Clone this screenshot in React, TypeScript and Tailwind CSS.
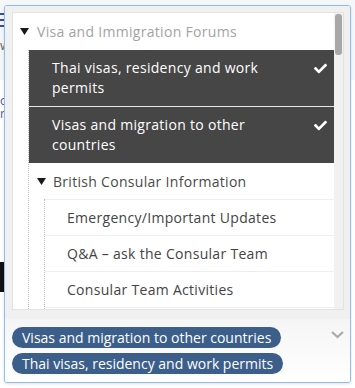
import React from "react";
import { FaCheck } from "react-icons/fa";

const font = { fontFamily: '"Open Sans", "Liberation Sans", sans-serif' };

function Tri() {
  return (
    <svg width="9" height="7" viewBox="0 0 9 7" className="shrink-0">
      <polygon points="0,0 9,0 4.5,7" fill="#1a1a1a" />
    </svg>
  );
}

function DarkRow({ lines }: { lines: string[] }) {
  return (
    <div className="flex items-start justify-between bg-[#464646] pl-[23px] pr-[7px] py-2 text-white text-[14px] leading-[20px] tracking-[0.3px]">
      <div>
        {lines.map((l) => (
          <div key={l}>{l}</div>
        ))}
      </div>
      <FaCheck className="mt-[4px] text-[13px]" />
    </div>
  );
}

function ChildRow({ text }: { text: string }) {
  return (
    <div className="h-[36px] flex items-center pl-[22px] text-[14px] tracking-[0.3px] text-[#444] border-t border-[#eeeeee]">
      {text}
    </div>
  );
}

export default function App() {
  return (
    <div className="relative w-[355px] h-[388px] overflow-hidden bg-white" style={font}>
      {/* background page */}
      <div className="h-[80px] bg-[#f5f6f8] pt-[13px] flex flex-col items-start">
        <div className="flex flex-col gap-[4px] w-[14px]">
          <div className="h-[2px] bg-[#3a4aa8]" />
          <div className="h-[2px] bg-[#3a4aa8]" />
          <div className="h-[2px] bg-[#3a4aa8]" />
        </div>
        <span className="mt-[12px] text-[13px] text-[#666] leading-none">w</span>
      </div>
      <div className="pt-[14px] flex flex-col items-start">
        <span className="text-[12px] leading-[13px] whitespace-pre-line text-[#4a4f9a]">{"o\nr"}</span>
      </div>
      <div className="mt-[142px] h-[30px] w-[20px] bg-[#111]" />

      {/* popup */}
      <div className="absolute left-[4px] top-[5px] w-[347px] h-[378px] border border-[#8fbdec] rounded-[3px] bg-white shadow-[0_1px_3px_rgba(0,0,0,0.12)] flex flex-col overflow-hidden">
        <div className="bg-[#f0f0f0] pt-[6px] pl-[7px] pr-[6px] pb-[9px]">
          <div className="h-[298px] bg-white border border-[#e2e2e2] flex overflow-hidden">
            <div className="flex-1 overflow-hidden">
              <div className="h-[37px] flex items-center pl-[7px] gap-[8px] text-[14px] tracking-[0.3px] text-[#a3a3a3]">
                <Tri />
                <span>Visa and Immigration Forums</span>
              </div>
              <div className="ml-[15px] border-l border-dotted border-[#bbbbbb]">
                <DarkRow lines={["Thai visas, residency and work", "permits"]} />
                <div className="h-px bg-[#e6e6e6]" />
                <DarkRow lines={["Visas and migration to other", "countries"]} />
                <div className="h-[36px] flex items-center pl-[8px] gap-[7px] text-[14px] tracking-[0.3px] text-[#4a4a4a]">
                  <Tri />
                  <span>British Consular Information</span>
                </div>
                <div className="ml-[15px] border-l border-dotted border-[#bbbbbb]">
                  <ChildRow text="Emergency/Important Updates" />
                  <ChildRow text="Q&A – ask the Consular Team" />
                  <ChildRow text="Consular Team Activities" />
                  <ChildRow text="" />
                </div>
              </div>
            </div>
            <div className="w-[9px] bg-[#f1f1f1] pt-[1px] px-[1px]">
              <div className="h-[41px] bg-[#a8a8a8] rounded-[3px]" />
            </div>
          </div>
        </div>
        <div className="flex-1 bg-gradient-to-b from-[#f5f5f5] to-white flex justify-between pl-[7px] pr-[6px] pt-[8px]">
          <div className="flex flex-col items-start gap-[5px]">
            <span className="h-[21px] flex items-center rounded-full bg-[#3b5e8b] text-white text-[14px] px-[10px]">
              Visas and migration to other countries
            </span>
            <span className="h-[21px] flex items-center rounded-full bg-[#3b5e8b] text-white text-[14px] px-[10px]">
              Thai visas, residency and work permits
            </span>
          </div>
          <svg width="13" height="8" viewBox="0 0 13 8" className="mt-[4px]">
            <polyline points="1,1 6.5,6 12,1" fill="none" stroke="#aaaaaa" strokeWidth="2.2" />
          </svg>
        </div>
      </div>
    </div>
  );
}
